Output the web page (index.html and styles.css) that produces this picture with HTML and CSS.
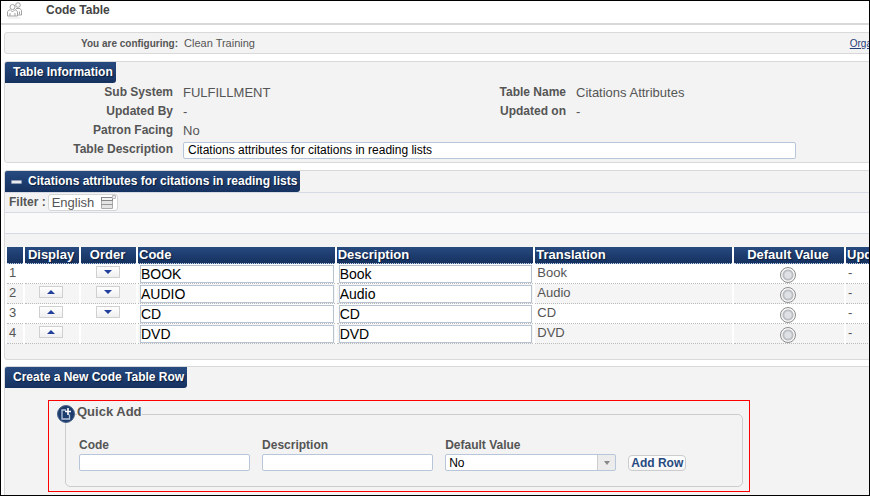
FILE: index.html
```html
<!DOCTYPE html>
<html lang="en">
<head>
<meta charset="utf-8">
<title>Code Table</title>
<link rel="stylesheet" href="styles.css">
</head>
<body>
<header class="page-head">
  <svg class="people" viewBox="0 0 18 18" width="18" height="18" fill="#fff" stroke="#a3a3a3" aria-hidden="true">
    <circle cx="12" cy="4" r="2.3"/>
    <path d="M10 7.500h4l1.500 2v4.500h-4"/>
    <circle cx="6.500" cy="6" r="2.500"/>
    <path d="M4 8.500 1.500 10.500v4.500h10v-4.500L9 8.500 6.500 11z"/>
    <path d="M4 12v3M9 12v3M13.500 10.500v3"/>
    <path d="M1.500 17h13" stroke="#e6e6e6"/>
  </svg>
  <h1>Code Table</h1>
</header>
<main>
  <section class="config">
    <strong>You are configuring:</strong>
    <span>Clean Training</span>
    <a href="#">Orga</a>
  </section>

  <section class="panel info-panel">
    <h2 class="tab">Table Information</h2>
    <div class="info">
      <b>Sub System</b><span>FULFILLMENT</span>
      <b>Table Name</b><span>Citations Attributes</span>
      <b>Updated By</b><span>-</span>
      <b>Updated on</b><span>-</span>
      <b>Patron Facing</b><span class="wide">No</span>
      <label for="desc">Table Description</label>
      <div class="wide"><input class="field" id="desc" type="text" value="Citations attributes for citations in reading lists"></div>
    </div>
  </section>

  <section class="panel list-panel">
    <h2 class="tab"><i class="minus"></i>Citations attributes for citations in reading lists</h2>
    <div class="filter">
      <label for="lang">Filter :</label>
      <span class="lang">
        <select id="lang"><option>English</option></select>
        <svg viewBox="0 0 17 15" width="17" height="15" aria-hidden="true">
          <path d="M1.500 2.500h11v11h-11z" fill="#e4e4e4" stroke="#aaa"/>
          <path d="M1 2h12v4H1z" fill="#888"/>
          <path d="M2 3h10v2H2z" fill="#f4f4f4"/>
          <path d="M1 9.500h12" stroke="#999"/>
          <path d="M12.500 .500h3v3h-3z" fill="#eee" stroke="#bbb"/>
        </svg>
      </span>
    </div>
    <div class="band"></div>
    <table>
      <colgroup><col class="c-num"><col class="c-up"><col class="c-down"><col><col><col><col class="c-def"><col class="c-upd"></colgroup>
      <thead>
        <tr><th></th><th class="mid">Display</th><th class="mid">Order</th><th>Code</th><th>Description</th><th>Translation</th><th class="mid">Default Value</th><th>Upd</th></tr>
      </thead>
      <tbody>
        <tr><td>1</td><td></td><td class="mid"><button class="move down" aria-label="Move down"></button></td>
          <td><input type="text" aria-label="Code" value="BOOK"></td><td><input type="text" aria-label="Description" value="Book"></td><td>Book</td>
          <td class="mid"><input type="radio" name="def" aria-label="Default"></td><td>-</td></tr>
        <tr><td>2</td><td class="mid"><button class="move up" aria-label="Move up"></button></td><td class="mid"><button class="move down" aria-label="Move down"></button></td>
          <td><input type="text" aria-label="Code" value="AUDIO"></td><td><input type="text" aria-label="Description" value="Audio"></td><td>Audio</td>
          <td class="mid"><input type="radio" name="def" aria-label="Default"></td><td>-</td></tr>
        <tr><td>3</td><td class="mid"><button class="move up" aria-label="Move up"></button></td><td class="mid"><button class="move down" aria-label="Move down"></button></td>
          <td><input type="text" aria-label="Code" value="CD"></td><td><input type="text" aria-label="Description" value="CD"></td><td>CD</td>
          <td class="mid"><input type="radio" name="def" aria-label="Default"></td><td>-</td></tr>
        <tr><td>4</td><td class="mid"><button class="move up" aria-label="Move up"></button></td><td></td>
          <td><input type="text" aria-label="Code" value="DVD"></td><td><input type="text" aria-label="Description" value="DVD"></td><td>DVD</td>
          <td class="mid"><input type="radio" name="def" aria-label="Default"></td><td>-</td></tr>
      </tbody>
    </table>
  </section>

  <section class="panel create-panel">
    <h2 class="tab">Create a New Code Table Row</h2>
    <div class="highlight">
      <div class="quick">
        <h3>
          <svg viewBox="0 0 18 18" width="18" height="18" aria-hidden="true">
            <circle cx="9" cy="9" r="8.500" fill="#1c3c6e" stroke="#4a6187"/>
            <path d="M9 5H5v9h7.500V9.500" fill="none" stroke="#b9c6dc" stroke-width="1.300"/>
            <path d="M11 3v7M8 6.500h6" stroke="#fff" stroke-width="1.600"/>
          </svg>
          <span>Quick Add</span>
        </h3>
        <form class="quick-form">
          <div class="cell"><label for="q-code">Code</label><input class="field" id="q-code" type="text"></div>
          <div class="cell"><label for="q-desc">Description</label><input class="field" id="q-desc" type="text"></div>
          <div class="cell has-drop"><label for="q-def">Default Value</label><select class="field drop" id="q-def"><option>No</option></select></div>
          <button class="add" type="button">Add Row</button>
        </form>
      </div>
    </div>
  </section>
</main>
</body>
</html>
```
FILE: styles.css
```css
* { box-sizing: border-box; }

body {
  margin: 0;
  height: 100vh;
  overflow: hidden;
  border: 1px solid #000;
  background: #fff;
  color: #555;
  font: 13px/19px "Liberation Sans", Arial, sans-serif;
}

input, select, button { margin: 0; font-family: inherit; }

.page-head {
  display: flex;
  gap: 22px;
  height: 24px;
  padding-left: 5px;
  border-bottom: 2px solid #d9d9d9;
}

h1 {
  margin: 0;
  font-size: 12px;
  line-height: 18px;
  color: #444;
}

main {
  display: flex;
  flex-direction: column;
  gap: 7px;
  margin-right: -4px;
  padding: 7px 0 0 3px;
}

.config {
  display: flex;
  align-items: center;
  gap: 6px;
  height: 22px;
  padding: 0 0 0 76px;
  border: 1px solid #d9d9d9;
  border-radius: 3px;
  background: #f3f3f3;
  font-size: 11px;
}

.config strong { font-size: 10px; }
.config a { margin-left: auto; font-size: 10px; color: #1f3f77; }

.panel {
  border: 1px solid #d9d9d9;
  border-radius: 3px;
  background: #f3f3f3;
}

.tab {
  display: flex;
  align-items: center;
  width: fit-content;
  height: 21px;
  margin: 0;
  padding: 0 3px 0 8px;
  border-radius: 2px 0 3px 0;
  background: linear-gradient(#274a80, #15315f);
  color: #fff;
  font-size: 12px;
  text-shadow: 1px 1px 1px #0a1c3c;
}

.info {
  display: grid;
  grid-template-columns: 168px 303fr 70px 296fr;
  column-gap: 10px;
  padding-bottom: 2px;
}

.info b, .info label {
  text-align: right;
  font-size: 12px;
  font-weight: bold;
}

.wide { grid-column: 2 / -1; }
.info div { display: flex; align-items: center; height: 20px; }

.field {
  width: 100%;
  height: 17px;
  padding: 0 4px;
  border: 1px solid #b7c6d9;
  border-radius: 2px;
  background: #fff;
  color: #000;
  font-size: 12px;
}

.info .field { width: 89%; }

.list-panel { padding-bottom: 15px; }
.list-panel .tab { padding-left: 6px; }

.minus {
  width: 11px;
  height: 4px;
  margin-right: 6px;
  border: 1px solid #8e9cb4;
  border-radius: 1px;
  background: #e8ebf0;
}

.filter {
  display: flex;
  align-items: center;
  gap: 2px;
  height: 20px;
  padding-left: 4px;
  border-top: 1px solid #d5dae5;
}

.filter label { font-size: 12px; font-weight: bold; }

.lang {
  display: flex;
  align-items: center;
  height: 17px;
  border: 1px solid #d6d6d6;
  border-radius: 3px;
  background: #fff;
}

.lang select {
  appearance: none;
  width: 51px;
  height: 15px;
  padding: 0 3px;
  border: 0;
  background: none;
  color: #555;
  font-size: 13px;
  line-height: 15px;
}

.band {
  height: 22px;
  margin-bottom: 13px;
  border: 1px solid #d5dae5;
  border-width: 1px 0;
  background: #fafafa;
}

table {
  width: 100%;
  table-layout: fixed;
  border-spacing: 2px 0;
  background: #fff;
}

.c-num { width: 16px; }
.c-up { width: 54px; }
.c-down { width: 55px; }
.c-def { width: 110px; }
.c-upd { width: 24px; }

th {
  height: 17px;
  padding: 0 1px;
  border-bottom: 1px dotted #c9d2e0;
  background: linear-gradient(#274a80, #15315f);
  color: #fff;
  font-size: 13px;
  line-height: 16px;
  text-align: left;
  white-space: nowrap;
  text-shadow: 1px 1px 1px #0a1c3c;
}

td {
  height: 20px;
  padding: 0 1px 0 2px;
  border-bottom: 1px dotted #bbb;
  line-height: 17px;
  vertical-align: top;
}

tbody tr:nth-child(even) td { background: #f5f5f5; }
th.mid, td.mid { padding: 0 2px 0 0; text-align: center; }

td input[type="text"] {
  display: block;
  width: 100%;
  height: 18px;
  margin-top: 1px;
  padding: 0;
  border: 1px solid #b9c4d3;
  background: #fff;
  color: #000;
  font-size: 14px;
}

td input[type="radio"] {
  appearance: none;
  display: block;
  width: 16px;
  height: 16px;
  margin: 3px auto 0;
  border: 1px solid #8c8c8c;
  border-radius: 50%;
  background: radial-gradient(circle, #dfe1e4 3px, #c4c7cc 4px, #b4b7bc 5px, #f8f8f8 6px);
}

.move {
  display: grid;
  place-items: center;
  width: 24px;
  height: 12px;
  margin: 2px auto 0;
  padding: 0;
  border: 1px solid #d0d0d0;
  background: linear-gradient(#fff, #f0f0f0);
}

.move::before {
  content: "";
  border: 4px solid transparent;
  border-width: 0 4px;
}

.move.up::before { border-bottom: 4px solid #233f9c; }
.move.down::before { border-top: 4px solid #233f9c; }

.create-panel { margin-top: -1px; padding-bottom: 20px; }

.highlight {
  width: 81%;
  margin: 12px 0 0 43px;
  padding: 13px 6px 4px 16px;
  border: 1px solid #f00;
}

.quick {
  padding: 0 13px 15px;
  border: 1px solid #ccc;
  border-radius: 5px;
}

.quick h3 {
  display: flex;
  align-items: center;
  gap: 2px;
  width: fit-content;
  height: 18px;
  margin: -10px 0 0 -22px;
  font-size: 13px;
}

.quick h3 span { height: 22px; line-height: 18px; background: #f3f3f3; }

.quick-form {
  display: grid;
  grid-template-columns: 171fr 171fr 171fr 58px 31fr;
  column-gap: 12px;
  align-items: end;
  margin-top: 14px;
}

.cell { display: flex; flex-direction: column; }
.cell label { font-size: 12px; font-weight: bold; line-height: 17px; }

.drop {
  appearance: none;
  padding: 0 3px;
  background: linear-gradient(90deg, #ccc 1px, #ececec 1px) right / 18px 100% no-repeat #fff;
}

.has-drop { position: relative; }

.has-drop::after {
  content: "";
  position: absolute;
  right: 6px;
  bottom: 6px;
  border: 3px solid transparent;
  border-width: 4px 3px 0;
  border-top-color: #888;
}

.add {
  height: 16px;
  padding: 0;
  border: 1px solid #ccc;
  border-radius: 4px;
  background: linear-gradient(#fff, #f4f4f4);
  color: #274a80;
  font-size: 12px;
  font-weight: bold;
  line-height: 14px;
  white-space: nowrap;
}
```
